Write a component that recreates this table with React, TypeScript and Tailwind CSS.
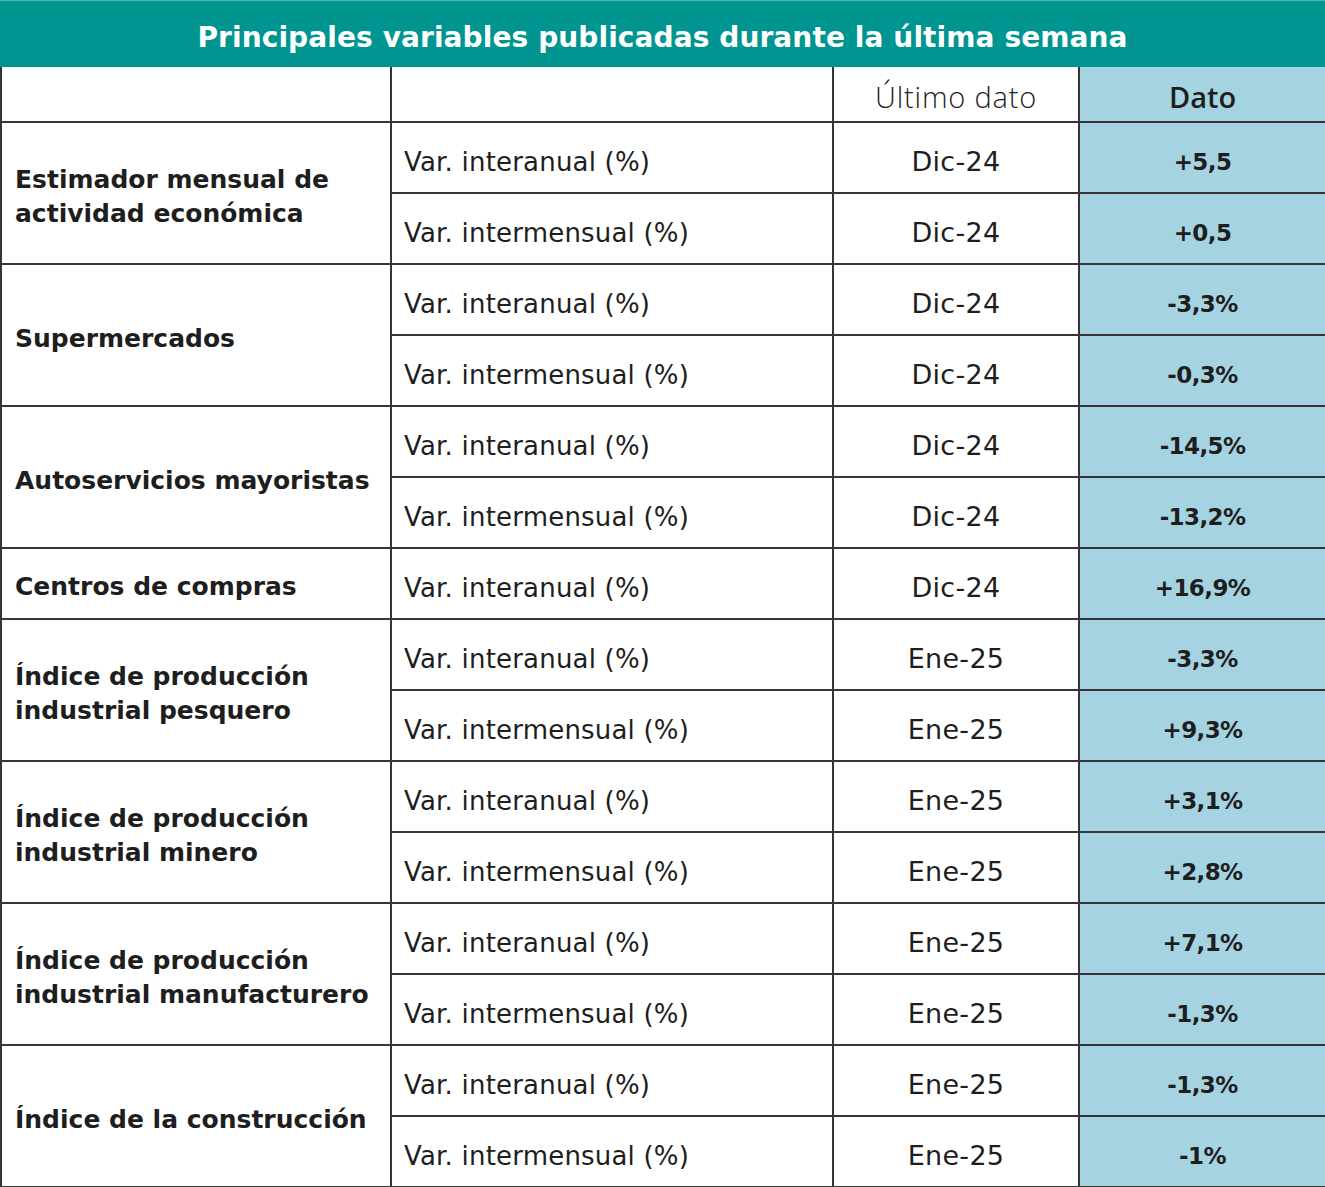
import { Fragment } from 'react';

type Row = { variable: string; fecha: string; dato: string };
type Group = { label: string[]; rows: Row[] };

const interanual = 'Var. interanual (%)';
const intermensual = 'Var. intermensual (%)';

const groups: Group[] = [
  {
    label: ['Estimador mensual de', 'actividad económica'],
    rows: [
      { variable: interanual, fecha: 'Dic-24', dato: '+5,5' },
      { variable: intermensual, fecha: 'Dic-24', dato: '+0,5' },
    ],
  },
  {
    label: ['Supermercados'],
    rows: [
      { variable: interanual, fecha: 'Dic-24', dato: '-3,3%' },
      { variable: intermensual, fecha: 'Dic-24', dato: '-0,3%' },
    ],
  },
  {
    label: ['Autoservicios mayoristas'],
    rows: [
      { variable: interanual, fecha: 'Dic-24', dato: '-14,5%' },
      { variable: intermensual, fecha: 'Dic-24', dato: '-13,2%' },
    ],
  },
  {
    label: ['Centros de compras'],
    rows: [{ variable: interanual, fecha: 'Dic-24', dato: '+16,9%' }],
  },
  {
    label: ['Índice de producción', 'industrial pesquero'],
    rows: [
      { variable: interanual, fecha: 'Ene-25', dato: '-3,3%' },
      { variable: intermensual, fecha: 'Ene-25', dato: '+9,3%' },
    ],
  },
  {
    label: ['Índice de producción', 'industrial minero'],
    rows: [
      { variable: interanual, fecha: 'Ene-25', dato: '+3,1%' },
      { variable: intermensual, fecha: 'Ene-25', dato: '+2,8%' },
    ],
  },
  {
    label: ['Índice de producción', 'industrial manufacturero'],
    rows: [
      { variable: interanual, fecha: 'Ene-25', dato: '+7,1%' },
      { variable: intermensual, fecha: 'Ene-25', dato: '-1,3%' },
    ],
  },
  {
    label: ['Índice de la construcción'],
    rows: [
      { variable: interanual, fecha: 'Ene-25', dato: '-1,3%' },
      { variable: intermensual, fecha: 'Ene-25', dato: '-1%' },
    ],
  },
];

const cell = 'border-2 border-[#363636] p-0';

export default function App() {
  return (
    <div className="w-[1325px] bg-white font-['DejaVu_Sans',sans-serif] text-[#1e1e1e]">
      {/* Title banner */}
      <div className="flex h-[67px] items-center justify-center border-t border-[#4fb3ad] bg-[#009590]">
        <h1 className="pt-[7px] text-[28px] font-bold tracking-[0.1px] text-white">
          Principales variables publicadas durante la última semana
        </h1>
      </div>

      <table className="w-full table-fixed border-collapse">
        <colgroup>
          <col className="w-[390px]" />
          <col className="w-[442px]" />
          <col className="w-[246px]" />
          <col />
        </colgroup>
        <thead>
          <tr className="h-[55px]">
            <th className={`${cell} border-t-0`} />
            <th className={`${cell} border-t-0`} />
            <th className={`${cell} border-t-0 pt-[6px] font-['Open_Sans',sans-serif] text-[29px] font-light tracking-[0.8px]`}>
              Último dato
            </th>
            <th className={`${cell} border-t-0 border-r-0 bg-[#a6d3e1] pt-[6px] font-['Open_Sans',sans-serif] text-[29px] font-semibold`}>
              Dato
            </th>
          </tr>
        </thead>
        <tbody>
          {groups.map((g) => (
            <Fragment key={g.label.join(' ')}>
              {g.rows.map((r, i) => (
                <tr key={i} className="h-[71px]">
                  {i === 0 && (
                    <td rowSpan={g.rows.length} className={`${cell} pl-[13px] pt-[7px] text-[25px] font-bold leading-[34px]`}>
                      {g.label.map((l) => (
                        <div key={l}>{l}</div>
                      ))}
                    </td>
                  )}
                  <td className={`${cell} pl-3 pt-[9px] text-[26px] tracking-[0.2px]`}>{r.variable}</td>
                  <td className={`${cell} pt-[9px] text-center text-[27px] tracking-[0.3px]`}>{r.fecha}</td>
                  <td className={`${cell} border-r-0 bg-[#a6d3e1] pt-[9px] text-center text-[23px] font-bold tracking-[-0.6px]`}>
                    {r.dato}
                  </td>
                </tr>
              ))}
            </Fragment>
          ))}
        </tbody>
      </table>
    </div>
  );
}
